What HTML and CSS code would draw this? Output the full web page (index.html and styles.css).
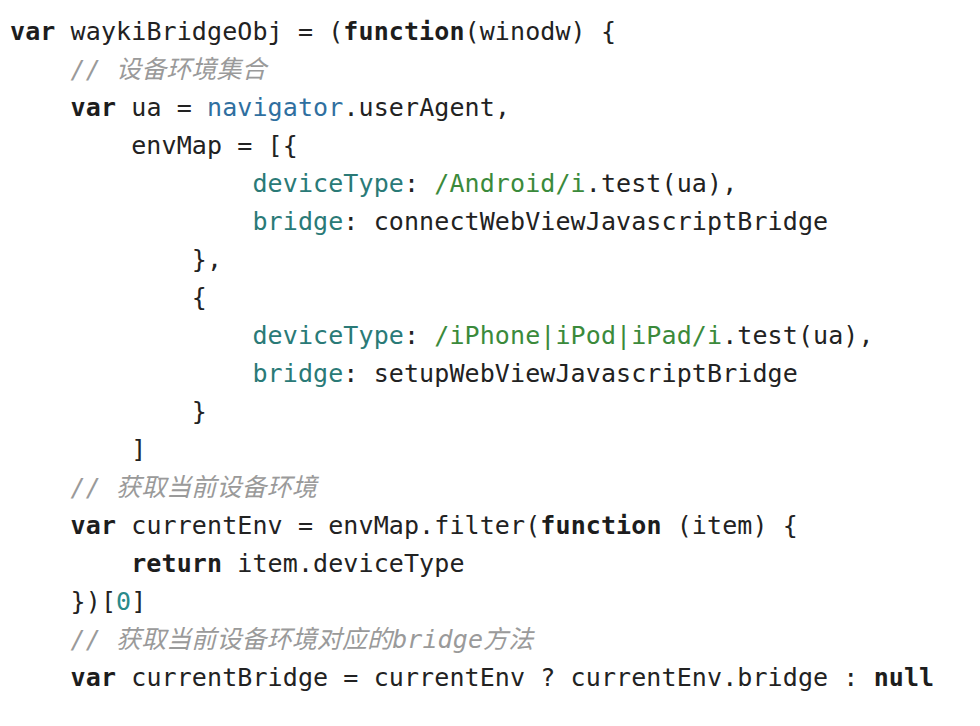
FILE: index.html
```html
<!DOCTYPE html>
<html lang="zh">
<head>
<meta charset="utf-8">
<link rel="stylesheet" href="styles.css">
</head>
<body>
<div class="code">
<div class="ln"><span class="kw">var</span> waykiBridgeObj = (<span class="kw">function</span>(winodw) {</div>
<div class="ln">    <span class="cm">// 设备环境集合</span></div>
<div class="ln">    <span class="kw">var</span> ua = <span class="gl">navigator</span>.userAgent,</div>
<div class="ln">        envMap = [{</div>
<div class="ln">                <span class="pr">deviceType</span>: <span class="re">/Android/i</span>.test(ua),</div>
<div class="ln">                <span class="pr">bridge</span>: connectWebViewJavascriptBridge</div>
<div class="ln">            },</div>
<div class="ln">            {</div>
<div class="ln">                <span class="pr">deviceType</span>: <span class="re">/iPhone|iPod|iPad/i</span>.test(ua),</div>
<div class="ln">                <span class="pr">bridge</span>: setupWebViewJavascriptBridge</div>
<div class="ln">            }</div>
<div class="ln">        ]</div>
<div class="ln">    <span class="cm">// 获取当前设备环境</span></div>
<div class="ln">    <span class="kw">var</span> currentEnv = envMap.filter(<span class="kw">function</span> (item) {</div>
<div class="ln">        <span class="kw">return</span> item.deviceType</div>
<div class="ln">    })[<span class="nm">0</span>]</div>
<div class="ln">    <span class="cm">// 获取当前设备环境对应的bridge方法</span></div>
<div class="ln">    <span class="kw">var</span> currentBridge = currentEnv ? currentEnv.bridge : <span class="kw">null</span></div>
</div>
</body>
</html>
```

FILE: styles.css
```css
html, body {
  margin: 0;
  padding: 0;
  background: #ffffff;
}
.code {
  padding: 13px 0 0 10px;
  font-family: "DejaVu Sans Mono", "Noto Sans CJK SC", monospace;
  font-size: 25px;
  line-height: 38px;
  letter-spacing: 0.1px;
  color: #222222;
}
.ln {
  white-space: pre;
  height: 38px;
}
.kw {
  font-weight: bold;
  color: #1d1d1d;
}
.cm {
  font-style: italic;
  color: #9a9a9a;
}
.gl {
  color: #2f6fa0;
}
.pr {
  color: #2a7a77;
}
.re {
  color: #3b8a3b;
}
.nm {
  color: #2a8a8a;
}
```
